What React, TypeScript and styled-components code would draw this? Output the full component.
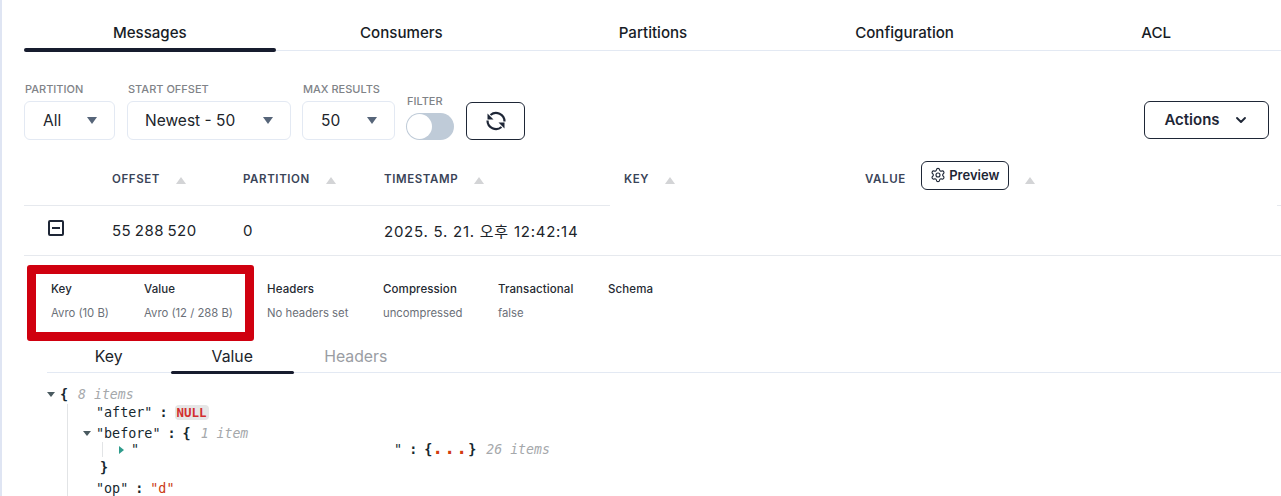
import * as React from "react";
import styled, { createGlobalStyle } from "styled-components";
import { ChevronDown, Settings } from "lucide-react";

const GlobalStyle = createGlobalStyle`
    html, body {
        margin: 0;
        padding: 0;
        background: #fff;
        overflow: hidden;
    }
    body {
        font-family: Inter, "Noto Sans CJK KR", sans-serif;
        color: #171a1c;
    }
`;

const Page = styled.div`
    position: relative;
    width: 1281px;
    height: 496px;
    overflow: hidden;
    box-sizing: border-box;
    border-left: 2px solid #dfe5f3;
    padding-left: 22px;
`;

const TabBar = styled.div`
    display: flex;
    height: 51px;
    border-bottom: 1px solid #e3e9f3;
    box-sizing: border-box;
`;

const Tab = styled.div<{ $active?: boolean }>`
    width: 251.6px;
    flex: none;
    height: 50px;
    box-sizing: border-box;
    padding-top: 24px;
    text-align: center;
    font-size: 15.1px;
    line-height: 18px;
    font-weight: 500;
    color: #171c26;
    position: relative;
    &::after {
        content: "";
        display: ${(p) => (p.$active ? "block" : "none")};
        position: absolute;
        left: 0;
        right: 0;
        bottom: -2px;
        height: 4px;
        border-radius: 2px;
        background: #171c2e;
    }
`;

const Toolbar = styled.div`
    display: flex;
    align-items: flex-end;
    height: 89px;
    padding-right: 12px;
`;

const Field = styled.div<{ $gap: number }>`
    display: flex;
    flex-direction: column;
    margin-right: ${(p) => p.$gap}px;
`;

const FieldLabel = styled.div`
    font-size: 11px;
    line-height: 14px;
    font-weight: 500;
    color: #7f8388;
    margin: 0 0 5px 1px;
`;

const Select = styled.div<{ $width: number; $pad: number }>`
    width: ${(p) => p.$width}px;
    height: 39px;
    box-sizing: border-box;
    border: 1px solid #e3e9f3;
    border-radius: 6px;
    padding: 0 17px 0 ${(p) => p.$pad}px;
    display: flex;
    align-items: center;
    justify-content: space-between;
    font-size: 15.5px;
    color: #20242a;
`;

const Caret = styled.span`
    width: 0;
    height: 0;
    border-left: 5px solid transparent;
    border-right: 5px solid transparent;
    border-top: 7px solid #566579;
    margin-top: -1px;
`;

const Toggle = styled.div`
    width: 48px;
    height: 27px;
    border-radius: 14px;
    background: #bfcbd8;
    box-sizing: border-box;
    padding: 1px;
`;

const Knob = styled.div`
    width: 25px;
    height: 25px;
    border-radius: 50%;
    background: #fff;
`;

const OutlineButton = styled.button`
    box-sizing: border-box;
    background: #fff;
    border: 1px solid #1e2636;
    border-radius: 6px;
    color: #1e2636;
    font-family: inherit;
    display: flex;
    align-items: center;
    justify-content: center;
    padding: 0;
`;

const RefreshButton = styled(OutlineButton)`
    width: 59px;
    height: 38px;
`;

const ActionsButton = styled(OutlineButton)`
    width: 125px;
    height: 38px;
    margin-left: auto;
    margin-bottom: 1px;
    gap: 13px;
    font-size: 15px;
    font-weight: 600;
    padding-bottom: 1px;
`;

const Table = styled.div`
    display: grid;
    grid-template-columns: 88px 131px 141px 226px 241px 1fr;
`;

const HeadCell = styled.div<{ $rule?: boolean; $inset?: boolean }>`
    height: 66px;
    box-sizing: border-box;
    padding: 31px 0 0 ${(p) => (p.$inset ? 14 : 0)}px;
    display: flex;
    align-items: flex-start;
    font-size: 11.5px;
    line-height: 16px;
    font-weight: 600;
    letter-spacing: 0.6px;
    color: #3a4458;
    border-bottom: 1px solid ${(p) => (p.$rule ? "#e6e9ee" : "transparent")};
`;

const ValueHeadCell = styled(HeadCell)`
    position: relative;
    &::after {
        content: "";
        position: absolute;
        right: 0;
        bottom: -1px;
        width: 4px;
        height: 1px;
        background: #e6e9ee;
    }
`;

const SortUp = styled.span`
    width: 0;
    height: 0;
    margin: 6px 0 0 16px;
    border-left: 5px solid transparent;
    border-right: 5px solid transparent;
    border-bottom: 7px solid #d3d4d6;
`;

const PreviewButton = styled(OutlineButton)`
    width: 88px;
    height: 29px;
    margin: -10px 0 0 15px;
    gap: 3px;
    font-size: 13px;
    font-weight: 600;
    letter-spacing: 0;
    padding-bottom: 2px;
`;

const RowCell = styled.div`
    height: 50px;
    box-sizing: border-box;
    border-bottom: 1px solid #e6e9ee;
    padding-bottom: 1px;
    display: flex;
    align-items: center;
    font-size: 15px;
    letter-spacing: 0.75px;
    color: #20242a;
`;

const OffsetCell = styled(RowCell)`
    letter-spacing: 0.5px;
    word-spacing: -1.2px;
`;

const ExpandBox = styled.span`
    width: 16px;
    height: 16px;
    margin: -4px 0 0 24px;
    box-sizing: border-box;
    border: 2px solid #1e2636;
    border-radius: 2px;
    display: flex;
    align-items: center;
    justify-content: center;
    &::before {
        content: "";
        width: 8px;
        height: 2px;
        background: #1e2636;
    }
`;

const MetaRow = styled.div`
    display: flex;
    padding: 26px 0 0 27px;
    height: 86px;
    box-sizing: border-box;
`;

const MetaItem = styled.div<{ $width: number }>`
    width: ${(p) => p.$width}px;
    flex: none;
`;

const MetaTitle = styled.div`
    font-size: 11.5px;
    line-height: 14px;
    font-weight: 500;
    letter-spacing: 0.1px;
    color: #252a32;
`;

const MetaValue = styled.div`
    font-size: 11.3px;
    line-height: 14px;
    margin-top: 10px;
    color: #6b7078;
`;

const Highlight = styled.div`
    position: absolute;
    left: 25px;
    top: 265px;
    width: 227px;
    height: 76px;
    box-sizing: border-box;
    border: 9px solid #d0000f;
    border-radius: 3px;
`;

const SubTabBar = styled.div`
    display: flex;
    margin-left: 23px;
    height: 31px;
    box-sizing: border-box;
    border-bottom: 1px solid #e3e9f3;
`;

const SubTab = styled.div<{ $active?: boolean; $muted?: boolean }>`
    width: 123.5px;
    box-sizing: border-box;
    text-align: center;
    font-size: 15.8px;
    line-height: 18px;
    padding-top: 6px;
    height: 30px;
    position: relative;
    color: ${(p) => (p.$muted ? "#9a9da3" : "#20242a")};
    &::after {
        content: "";
        display: ${(p) => (p.$active ? "block" : "none")};
        position: absolute;
        left: 0;
        right: 0;
        bottom: -2px;
        height: 3px;
        border-radius: 2px;
        background: #171c2e;
    }
`;

const Json = styled.div`
    padding: 12px 0 0 23px;
    font-family: "DejaVu Sans Mono", monospace;
    font-size: 13.4px;
    color: #16282f;
`;

const JsonLine = styled.div<{ $indent: number; $height: number; $top?: number }>`
    height: ${(p) => p.$height}px;
    line-height: ${(p) => p.$height}px;
    margin-top: ${(p) => p.$top ?? 0}px;
    padding-left: ${(p) => p.$indent}px;
    white-space: pre;
`;

const Nested = styled.div<{ $left: number }>`
    margin-left: ${(p) => p.$left}px;
    border-left: 1px solid #e2e4e6;
`;

const Arrow = styled.span<{ $open?: boolean }>`
    display: inline-block;
    vertical-align: middle;
    width: 0;
    height: 0;
    ${(p) =>
        p.$open
            ? `margin: -2px 5px 0 0;
               border-left: 4px solid transparent;
               border-right: 4px solid transparent;
               border-top: 5px solid #4a5a60;`
            : `margin: -1px 7px 0 0;
               border-top: 4px solid transparent;
               border-bottom: 4px solid transparent;
               border-left: 5px solid #2f9c8c;`}
`;

const Brace = styled.span`
    font-weight: 700;
`;

const Colon = styled.span`
    font-weight: 700;
    margin: 0 7px;
`;

const Count = styled.span`
    color: #a5a8ab;
    font-style: italic;
    font-size: 13.2px;
    margin-left: 10px;
`;

const NullTag = styled.span`
    display: inline-block;
    background: #e6e6e6;
    color: #d32f2f;
    font-weight: 700;
    font-size: 12.5px;
    line-height: 15px;
    padding: 0 2px;
    border-radius: 4px;
`;

const StringValue = styled.span`
    color: #cb3a12;
`;

const Dots = styled.span`
    color: #d23c10;
    font-weight: 700;
    font-size: 18px;
    line-height: 1px;
    letter-spacing: 1.16px;
`;

const RedactedGap = styled.span`
    display: inline-block;
    width: 255px;
`;

const SyncIcon = () => (
    <svg width="24" height="24" viewBox="0 0 24 24" fill="none" stroke="currentColor" strokeWidth="2.2">
        <path d="M20.5 12.5A8.5 8.5 0 0 0 6.5 6" />
        <path d="M3.5 11.5A8.5 8.5 0 0 0 17.5 18" />
        <path d="M3.5 4.5V10.5H9.5Z" fill="currentColor" stroke="none" />
        <path d="M20.5 19.5V13.5H14.5Z" fill="currentColor" stroke="none" />
    </svg>
);

export default function App() {
    const tabs = ["Messages", "Consumers", "Partitions", "Configuration", "ACL"];
    const meta = [
        { title: "Key", value: "Avro (10 B)", width: 93 },
        { title: "Value", value: "Avro (12 / 288 B)", width: 123 },
        { title: "Headers", value: "No headers set", width: 116 },
        { title: "Compression", value: "uncompressed", width: 115 },
        { title: "Transactional", value: "false", width: 110 },
        { title: "Schema", value: "", width: 80 },
    ];

    return (
        <Page>
            <GlobalStyle />
            <TabBar>
                {tabs.map((t, i) => (
                    <Tab key={t} $active={i === 0}>{t}</Tab>
                ))}
            </TabBar>

            <Toolbar>
                <Field $gap={12}>
                    <FieldLabel>PARTITION</FieldLabel>
                    <Select $width={91} $pad={18}>All<Caret /></Select>
                </Field>
                <Field $gap={11}>
                    <FieldLabel>START OFFSET</FieldLabel>
                    <Select $width={164} $pad={17}>Newest - 50<Caret /></Select>
                </Field>
                <Field $gap={11}>
                    <FieldLabel>MAX RESULTS</FieldLabel>
                    <Select $width={93} $pad={18}>50<Caret /></Select>
                </Field>
                <Field $gap={12}>
                    <FieldLabel>FILTER</FieldLabel>
                    <Toggle><Knob /></Toggle>
                </Field>
                <RefreshButton><SyncIcon /></RefreshButton>
                <ActionsButton>Actions <ChevronDown size={16} strokeWidth={2.8} /></ActionsButton>
            </Toolbar>

            <Table>
                <HeadCell $rule />
                <HeadCell $rule>OFFSET<SortUp /></HeadCell>
                <HeadCell $rule>PARTITION<SortUp /></HeadCell>
                <HeadCell $rule>TIMESTAMP<SortUp /></HeadCell>
                <HeadCell $inset>KEY<SortUp /></HeadCell>
                <ValueHeadCell $inset>
                    VALUE
                    <PreviewButton><Settings size={16} strokeWidth={1.7} />Preview</PreviewButton>
                    <SortUp />
                </ValueHeadCell>
                <RowCell><ExpandBox /></RowCell>
                <OffsetCell>55 288 520</OffsetCell>
                <RowCell>0</RowCell>
                <RowCell>2025. 5. 21. 오후 12:42:14</RowCell>
                <RowCell />
                <RowCell />
            </Table>

            <MetaRow>
                {meta.map((m) => (
                    <MetaItem key={m.title} $width={m.width}>
                        <MetaTitle>{m.title}</MetaTitle>
                        <MetaValue>{m.value}</MetaValue>
                    </MetaItem>
                ))}
            </MetaRow>
            <Highlight />

            <SubTabBar>
                <SubTab>Key</SubTab>
                <SubTab $active>Value</SubTab>
                <SubTab $muted>Headers</SubTab>
            </SubTabBar>

            <Json>
                <JsonLine $indent={0} $height={19}><Arrow $open /><Brace>{"{"}</Brace><Count>8 items</Count></JsonLine>
                <Nested $left={20}>
                    <JsonLine $indent={28} $height={18}>"after"<Colon>:</Colon><NullTag>NULL</NullTag></JsonLine>
                    <JsonLine $indent={15} $height={16} $top={4}><Arrow $open />"before"<Colon>:</Colon><Brace>{"{"}</Brace><Count>1 item</Count></JsonLine>
                    <Nested $left={34}>
                        <JsonLine $indent={16} $height={15}><Arrow />"<RedactedGap />"<Colon>:</Colon><Brace>{"{"}</Brace><Dots>...</Dots><Brace>{"}"}</Brace><Count>26 items</Count></JsonLine>
                    </Nested>
                    <JsonLine $indent={32} $height={21}><Brace>{"}"}</Brace></JsonLine>
                    <JsonLine $indent={28} $height={21}>"op"<Colon>:</Colon><StringValue>"d"</StringValue></JsonLine>
                </Nested>
            </Json>
        </Page>
    );
}
